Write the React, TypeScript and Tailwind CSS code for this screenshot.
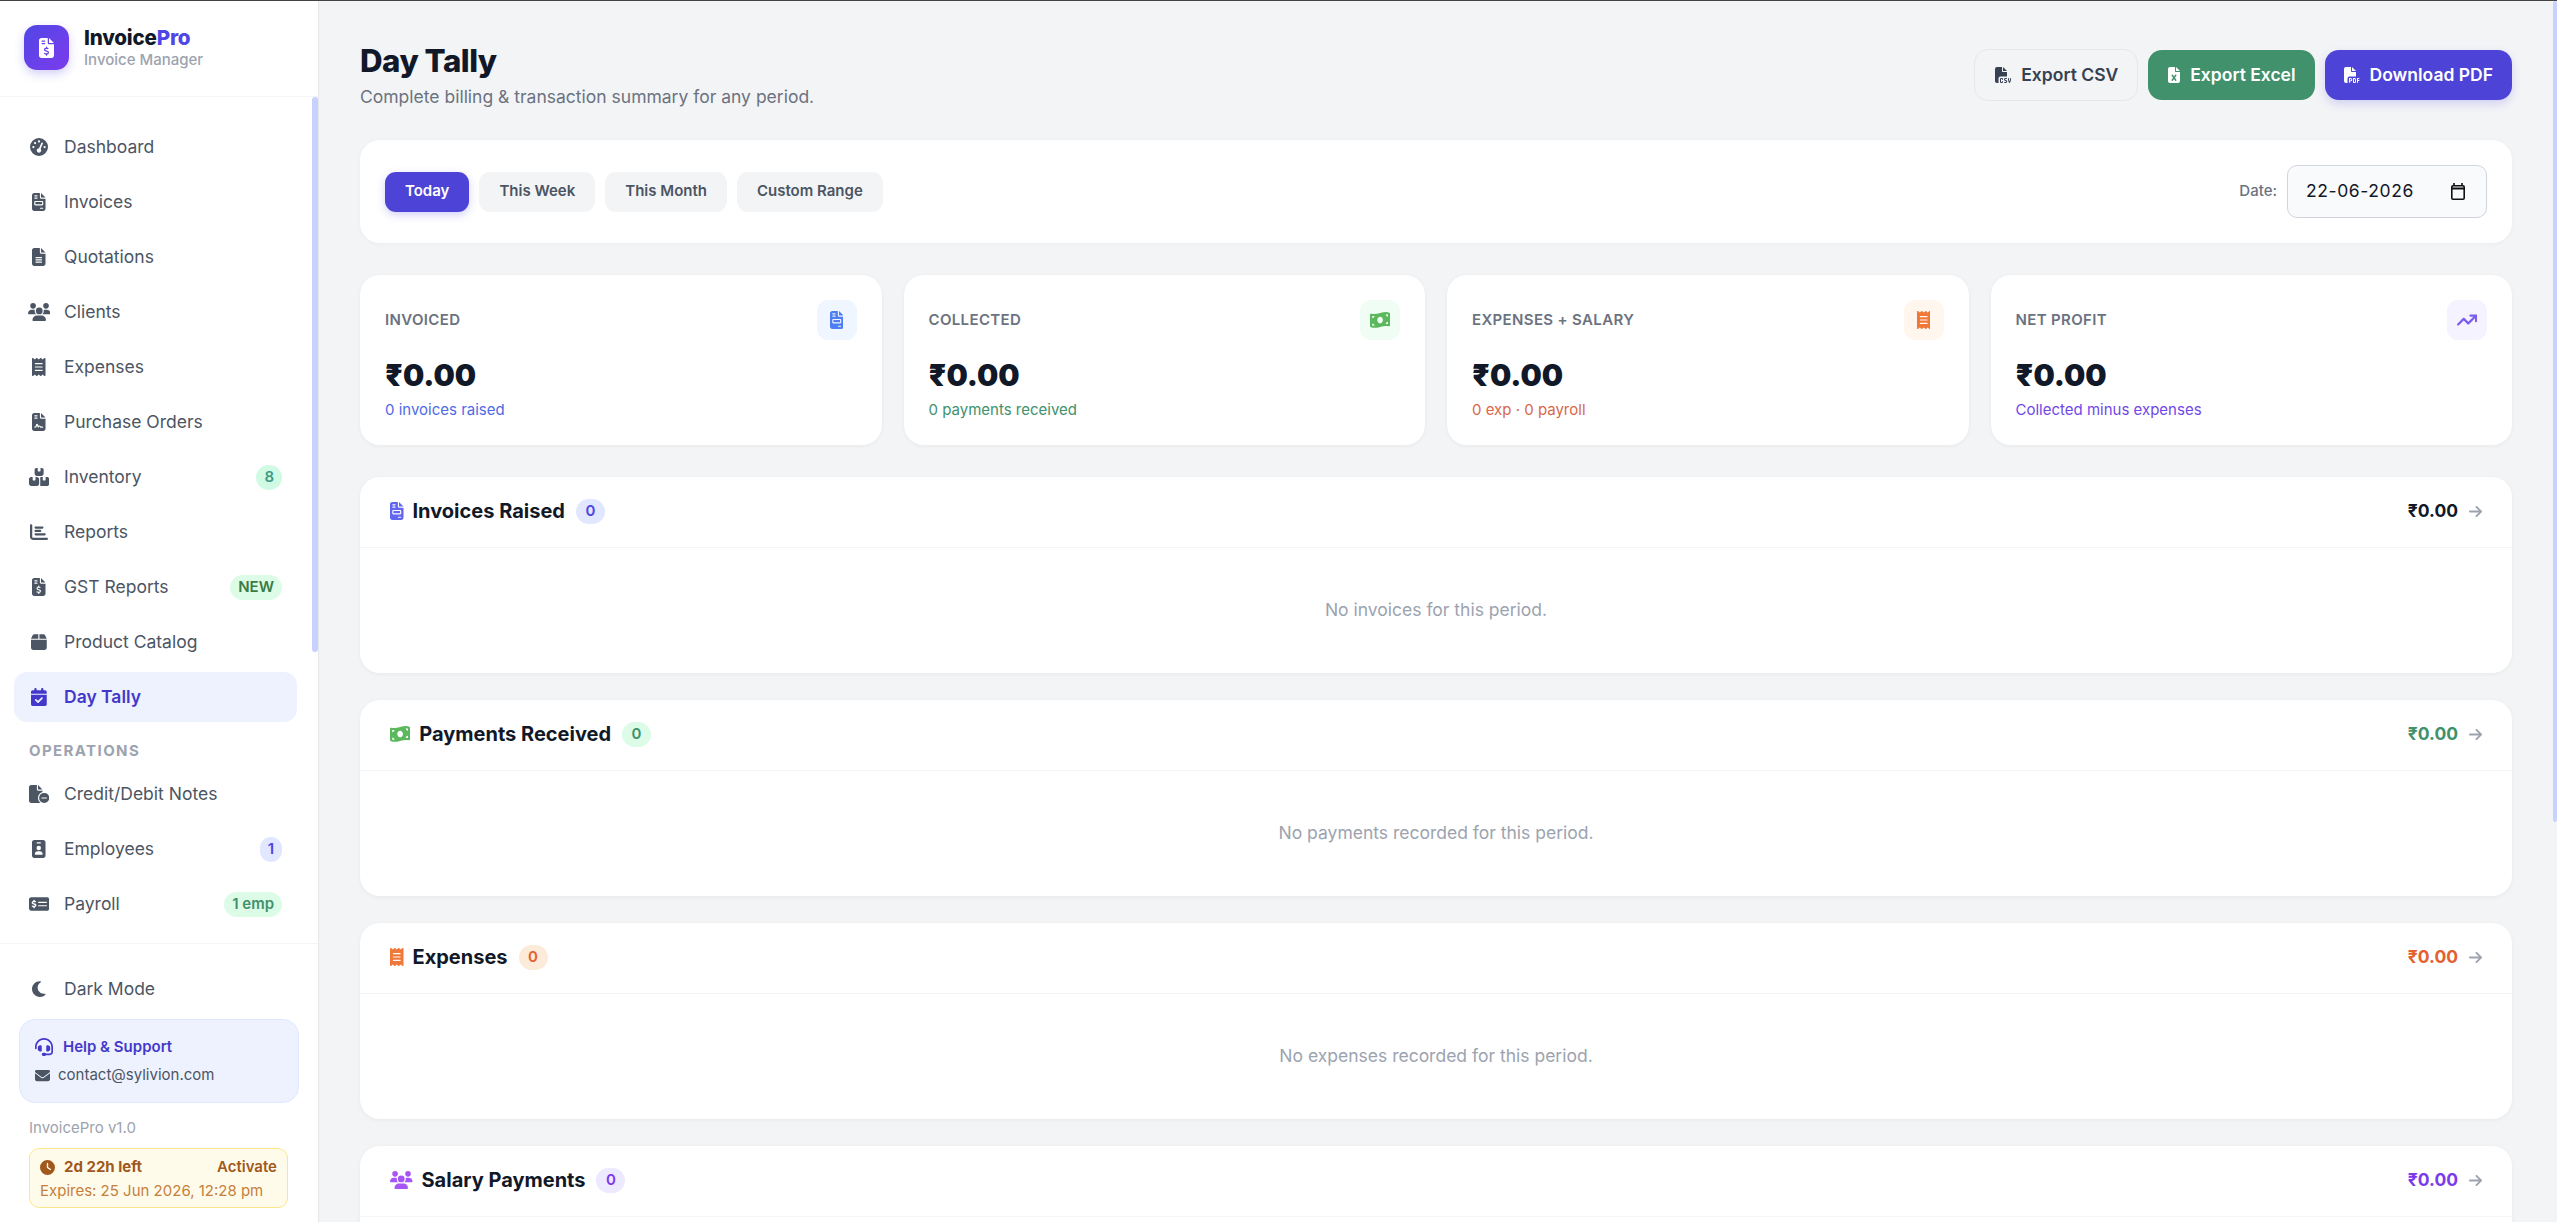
import React from "react";
import {
  FaGaugeHigh, FaFileInvoice, FaFileLines, FaUsers, FaReceipt, FaFileContract, FaBoxesStacked, FaChartBar,
  FaFileInvoiceDollar, FaBox, FaCalendarCheck, FaFileCircleMinus, FaIdBadge, FaMoneyCheckDollar, FaMoon,
  FaHeadset, FaEnvelope, FaClock, FaFileCsv, FaFileExcel, FaFilePdf, FaMoneyBillWave, FaArrowTrendUp, FaArrowRight,
} from "react-icons/fa6";

type IconType = React.ComponentType<{ className?: string }>;
type NavDef = { label: string; Icon: IconType; w: string; active?: boolean; badge?: string; badgeCls?: string };

const mainNav: NavDef[] = [
  { label: "Dashboard", Icon: FaGaugeHigh, w: "w-[18px]" },
  { label: "Invoices", Icon: FaFileInvoice, w: "w-[13.5px]" },
  { label: "Quotations", Icon: FaFileLines, w: "w-[13.5px]" },
  { label: "Clients", Icon: FaUsers, w: "w-[22.5px]" },
  { label: "Expenses", Icon: FaReceipt, w: "w-[13.5px]" },
  { label: "Purchase Orders", Icon: FaFileContract, w: "w-[13.5px]" },
  { label: "Inventory", Icon: FaBoxesStacked, w: "w-[20.25px]", badge: "8", badgeCls: "bg-[#d1fae5] text-[#3e9a86]" },
  { label: "Reports", Icon: FaChartBar, w: "w-[18px]" },
  { label: "GST Reports", Icon: FaFileInvoiceDollar, w: "w-[13.5px]", badge: "NEW", badgeCls: "bg-[#dcfce7] text-[#3a7d44]" },
  { label: "Product Catalog", Icon: FaBox, w: "w-[15.75px]" },
  { label: "Day Tally", Icon: FaCalendarCheck, w: "w-[15.75px]", active: true },
];
const opsNav: NavDef[] = [
  { label: "Credit/Debit Notes", Icon: FaFileCircleMinus, w: "w-[20.25px]" },
  { label: "Employees", Icon: FaIdBadge, w: "w-[13.5px]", badge: "1", badgeCls: "bg-[#e0e7ff] text-[#4f46e5]" },
  { label: "Payroll", Icon: FaMoneyCheckDollar, w: "w-[20.25px]", badge: "1 emp", badgeCls: "bg-[#dcfce7] text-[#40916c]" },
];

function NavItem({ item }: { item: NavDef }) {
  const { Icon } = item;
  return (
    <a className={`flex h-[50px] items-center rounded-[13px] pl-[15px] pr-[15px] text-[17.5px] ${item.active ? "bg-[#eef2ff] font-semibold text-[#4338ca]" : "font-normal text-[#4b5563]"}`}>
      <span className="flex w-[20px] justify-center"><Icon className={`h-[18px] shrink-0 ${item.w}`} /></span>
      <span className="ml-[15px] flex-1">{item.label}</span>
      {item.badge && (
        <span className={`flex h-[25px] items-center rounded-full px-[8px] text-[15px] font-semibold ${item.badgeCls}`}>{item.badge}</span>
      )}
    </a>
  );
}

function Sidebar() {
  return (
    <aside className="flex h-full w-[319px] shrink-0 flex-col border-r border-[#e5e7eb] bg-white">
      <div className="flex h-[96px] shrink-0 items-center gap-[15px] border-b border-[#f3f4f6] pb-[2px] pl-[24px]">
        <div className="flex h-[45px] w-[45px] items-center justify-center rounded-[13px] bg-gradient-to-br from-[#4f46e5] to-[#7c3aed] text-white shadow-[0_4px_10px_rgba(79,70,229,0.25)]">
          <FaFileInvoiceDollar className="h-[20px] w-[15px]" />
        </div>
        <div>
          <div className="text-[20.6px] font-extrabold leading-[24px] tracking-[-0.2px] text-[#111827]">Invoice<span className="text-[#4f46e5]">Pro</span></div>
          <div className="text-[15px] font-medium leading-[20px] text-[#9ca3af]">Invoice Manager</div>
        </div>
      </div>
      <nav className="relative min-h-0 flex-1 overflow-hidden pl-[14px] pr-[21px] pt-[25px]">
        <div className="flex flex-col gap-[5px]">
          {mainNav.map((n) => <NavItem key={n.label} item={n} />)}
        </div>
        <div className="mb-[9px] mt-[20px] pl-[15px] text-[15px] font-bold leading-[18px] tracking-[1.4px] text-[#9ca3af]">OPERATIONS</div>
        <div className="flex flex-col gap-[5px]">
          {opsNav.map((n) => <NavItem key={n.label} item={n} />)}
        </div>
        <div className="absolute right-0 top-0 h-[555px] w-[6px] rounded-[3px] bg-[#c7d2fe]" />
      </nav>
      <div className="h-[279px] shrink-0 border-t border-[#f3f4f6]">
        <div className="pl-[14px] pr-[21px] pt-[20px]">
          <NavItem item={{ label: "Dark Mode", Icon: FaMoon, w: "w-[13.5px]" }} />
        </div>
        <div className="mx-[19px] mt-[5px] h-[84px] rounded-[16px] border border-[#e0e7ff] bg-[#eef2ff] px-[15px] pt-[15px]">
          <div className="flex items-center text-[15px] font-semibold leading-[24px] text-[#4338ca]">
            <FaHeadset className="h-[18px] w-[18px]" /><span className="ml-[10px]">Help &amp; Support</span>
          </div>
          <div className="mt-[6px] flex items-center text-[15px] leading-[20px] text-[#4b5563]">
            <FaEnvelope className="h-[15px] w-[15px]" /><span className="ml-[8px]">contact@sylivion.com</span>
          </div>
        </div>
        <div className="ml-[29px] mt-[15px] text-[15px] leading-[20px] text-[#9ca3af]">InvoicePro v1.0</div>
        <div className="ml-[29px] mt-[10px] h-[60px] w-[259px] rounded-[10px] border border-[#fde68a] bg-[#fffbeb] px-[10px] pt-[6px]">
          <div className="flex items-center text-[15px] font-bold leading-[24px] text-[#a0581c]">
            <FaClock className="h-[15px] w-[15px]" /><span className="ml-[9px] flex-1">2d 22h left</span><span className="font-semibold">Activate</span>
          </div>
          <div className="whitespace-nowrap text-[15px] leading-[24px] text-[#c47f3c]">Expires: 25 Jun 2026, 12:28 pm</div>
        </div>
      </div>
    </aside>
  );
}

const stats: { label: string; sub: string; subCls: string; Icon: IconType; w: string; boxCls: string }[] = [
  { label: "INVOICED", sub: "0 invoices raised", subCls: "text-[#4f6ae5]", Icon: FaFileInvoice, w: "w-[13.5px]", boxCls: "bg-[#eff6ff] text-[#4f7df3]" },
  { label: "COLLECTED", sub: "0 payments received", subCls: "text-[#40916c]", Icon: FaMoneyBillWave, w: "w-[20.25px]", boxCls: "bg-[#f0fdf4] text-[#5cb85c]" },
  { label: "EXPENSES + SALARY", sub: "0 exp · 0 payroll", subCls: "text-[#d9674a]", Icon: FaReceipt, w: "w-[13.5px]", boxCls: "bg-[#fff7ed] text-[#f0793a]" },
  { label: "NET PROFIT", sub: "Collected minus expenses", subCls: "text-[#7048e8]", Icon: FaArrowTrendUp, w: "w-[20.25px]", boxCls: "bg-[#f5f3ff] text-[#7c5cf0]" },
];

const sections: { title: string; Icon: IconType; w: string; iconCls: string; badgeCls: string; amtCls: string; empty: string }[] = [
  { title: "Invoices Raised", Icon: FaFileInvoice, w: "w-[13.5px]", iconCls: "text-[#6366f1]", badgeCls: "bg-[#e0e7ff] text-[#4f46e5]", amtCls: "text-[#111827]", empty: "No invoices for this period." },
  { title: "Payments Received", Icon: FaMoneyBillWave, w: "w-[20.25px]", iconCls: "text-[#5cb85c]", badgeCls: "bg-[#dcfce7] text-[#40916c]", amtCls: "text-[#40916c]", empty: "No payments recorded for this period." },
  { title: "Expenses", Icon: FaReceipt, w: "w-[13.5px]", iconCls: "text-[#f0793a]", badgeCls: "bg-[#fbebd8] text-[#e4602f]", amtCls: "text-[#e4602f]", empty: "No expenses recorded for this period." },
  { title: "Salary Payments", Icon: FaUsers, w: "w-[22.5px]", iconCls: "text-[#a855f7]", badgeCls: "bg-[#ede9fe] text-[#7c3aed]", amtCls: "text-[#7c3aed]", empty: "No salary payments for this period." },
];

export default function App() {
  return (
    <div className="flex h-screen flex-col overflow-hidden bg-[#f3f4f6] font-['Inter',sans-serif]">
      <div className="h-[1px] shrink-0 bg-[#444444]" />
      <div className="flex min-h-0 flex-1">
        <Sidebar />
        <main className="relative min-w-0 flex-1 overflow-hidden pl-[41px] pr-[45px] pt-[42px]">
          <div className="absolute right-0 top-0 h-[821px] w-[4px] rounded-[2px] bg-[#c7d2fe]" />
          <header className="flex items-start justify-between">
            <div>
              <h1 className="text-[31.25px] font-extrabold leading-[37px] tracking-[-0.5px] text-[#111827]">Day Tally</h1>
              <p className="mt-[5px] text-[17.5px] leading-[24px] text-[#6b7280]">Complete billing &amp; transaction summary for any period.</p>
            </div>
            <div className="mt-[6px] flex items-center gap-[10px] text-[17.5px] font-semibold">
              <button className="flex h-[52px] items-center gap-[10px] rounded-[14px] border border-[#e5e7eb] pl-[20px] pr-[19px] text-[#374151]">
                <FaFileCsv className="h-[16px] w-[16px]" />Export CSV
              </button>
              <button className="flex h-[50px] items-center gap-[10px] rounded-[14px] bg-[#40916c] pl-[20px] pr-[19px] text-white">
                <FaFileExcel className="h-[16px] w-[12px]" />Export Excel
              </button>
              <button className="flex h-[50px] items-center gap-[10px] rounded-[14px] bg-[#4d43d6] pl-[19px] pr-[19px] text-white shadow-[0_4px_10px_rgba(79,70,229,0.2)]">
                <FaFilePdf className="h-[16px] w-[16px]" />Download PDF
              </button>
            </div>
          </header>

          <section className="mt-[31px] flex h-[103px] items-center justify-between rounded-[20px] bg-white pl-[25px] pr-[25px] shadow-[0_1px_4px_rgba(0,0,0,0.04)]">
            <div className="flex gap-[10px] text-[15px] font-semibold">
              <button className="h-[40px] rounded-[11px] bg-[#4d43d6] px-[20px] text-white shadow-[0_3px_8px_rgba(79,70,229,0.25)]">Today</button>
              <button className="h-[40px] rounded-[11px] bg-[#f3f4f6] px-[20px] text-[#4b5563]">This Week</button>
              <button className="h-[40px] rounded-[11px] bg-[#f3f4f6] px-[20px] text-[#4b5563]">This Month</button>
              <button className="h-[40px] rounded-[11px] bg-[#f3f4f6] px-[20px] text-[#4b5563]">Custom Range</button>
            </div>
            <div className="flex items-center gap-[10px]">
              <span className="text-[15px] font-medium text-[#6b7280]">Date:</span>
              <div className="flex h-[53px] w-[200px] items-center justify-between rounded-[10px] border border-[#d1d5db] bg-[#f9fafb] pl-[18px] pr-[21px] text-[17.5px] tracking-[0.6px] text-[#111827]">
                <span>22-06-2026</span>
                <svg width="14" height="17" viewBox="0 0 14 17" fill="none" aria-hidden="true">
                  <path d="M3 0v3M11 0v3" stroke="#111" strokeWidth="1.6" />
                  <rect x="0.8" y="2.8" width="12.4" height="13.4" rx="1.2" stroke="#111" strokeWidth="1.6" />
                  <path d="M1 5.5h12" stroke="#111" strokeWidth="2" />
                </svg>
              </div>
            </div>
          </section>

          <section className="mt-[32px] grid grid-cols-4 gap-[22px]">
            {stats.map((s) => (
              <div key={s.label} className="h-[170px] rounded-[20px] bg-white px-[25px] pt-[25px] shadow-[0_1px_4px_rgba(0,0,0,0.05)]">
                <div className="flex items-center justify-between">
                  <span className="text-[15px] font-semibold tracking-[0.35px] text-[#6b7280]">{s.label}</span>
                  <span className={`flex h-[40px] w-[40px] items-center justify-center rounded-[11px] ${s.boxCls}`}><s.Icon className={`h-[18px] ${s.w}`} /></span>
                </div>
                <div className="mt-[15px] text-[30px] font-black leading-[40px] text-[#111827]">₹0.00</div>
                <div className={`mt-[5px] text-[15px] leading-[20px] ${s.subCls}`}>{s.sub}</div>
              </div>
            ))}
          </section>

          <div className="mt-[32px] flex flex-col gap-[27px]">
            {sections.map((s) => (
              <section key={s.title} className="h-[196px] shrink-0 rounded-[20px] bg-white shadow-[0_1px_4px_rgba(0,0,0,0.05)]">
                <div className="flex h-[71px] items-center justify-between border-b border-[#f3f4f6] pb-[2px] pl-[30px] pr-[30px]">
                  <div className="flex items-center">
                    <s.Icon className={`h-[18px] ${s.w} ${s.iconCls}`} />
                    <h2 className="ml-[9px] text-[20px] font-bold text-[#111827]">{s.title}</h2>
                    <span className={`ml-[11px] flex h-[25px] min-w-[29px] items-center justify-center rounded-full px-[9px] text-[15px] font-semibold ${s.badgeCls}`}>0</span>
                  </div>
                  <div className="flex items-center gap-[11px]">
                    <span className={`text-[17.5px] font-bold ${s.amtCls}`}>₹0.00</span>
                    <FaArrowRight className="h-[15px] w-[13px] text-[#9ca3af]" />
                  </div>
                </div>
                <div className="flex h-[124px] items-center justify-center text-[17.5px] text-[#9ca3af]">{s.empty}</div>
              </section>
            ))}
          </div>
        </main>
      </div>
    </div>
  );
}
